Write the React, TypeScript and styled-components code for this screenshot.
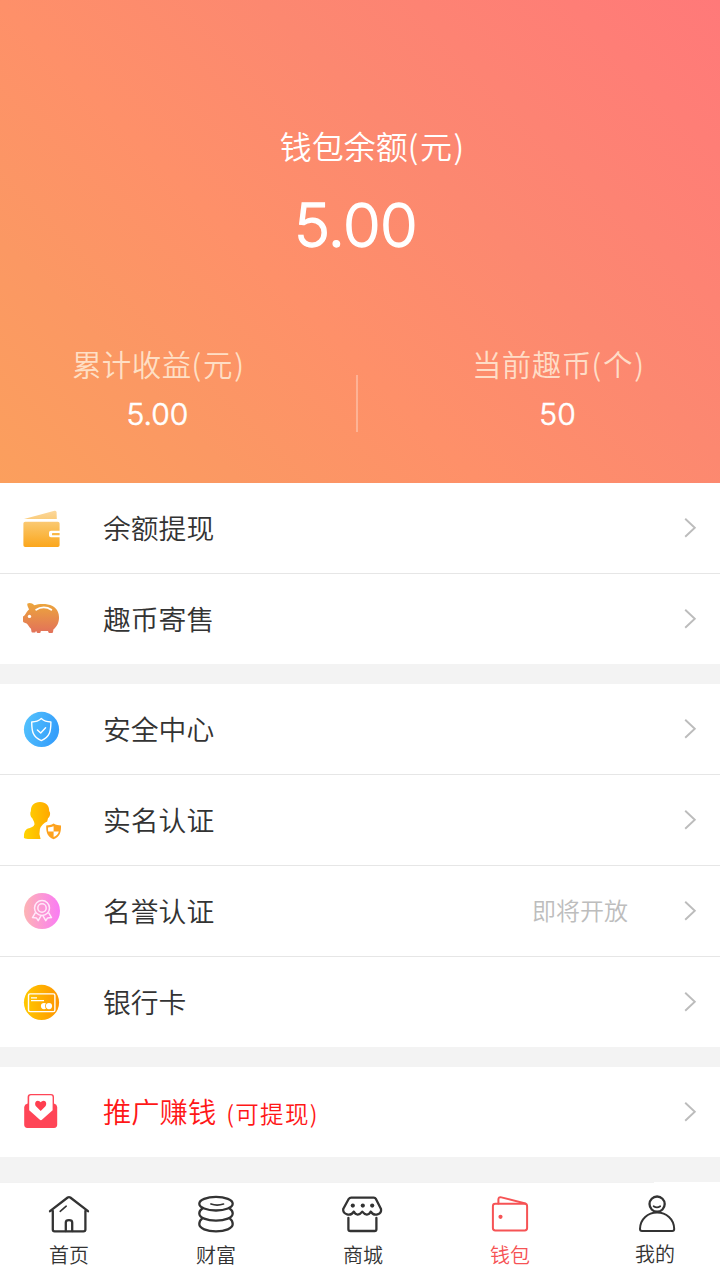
import React from 'react';
import styled, { createGlobalStyle } from 'styled-components';

const GlobalStyle = createGlobalStyle`
  * { box-sizing: border-box; }
  body {
    margin: 0;
    background: #f3f3f3;
    font-family: Inter, "Noto Sans CJK SC", sans-serif;
    font-weight: 350;
    color: #333;
  }
`;

const Page = styled.div`
  width: 720px;
  height: 1280px;
  display: flex;
  flex-direction: column;
  background: #f3f3f3;
  overflow: hidden;
`;

const Hero = styled.header`
  height: 483px;
  flex: none;
  display: flex;
  flex-direction: column;
  align-items: center;
  padding-top: 121px;
  color: #fff;
  background: linear-gradient(45deg, #fb9f5d 0%, #fb9863 20%, #fe9069 40%, #fc8870 62%, #ff7979 100%);
`;

const HeroLabel = styled.div`
  font-family: "Noto Sans CJK SC", sans-serif;
  font-size: 32px;
  line-height: 48px;
  padding-left: 24px;
  white-space: nowrap;
`;

const Unit = styled.span<{ $gap: number }>`
  letter-spacing: ${(p) => p.$gap}px;
  margin-right: ${(p) => -p.$gap}px;
`;

const HeroAmount = styled.div`
  font-size: 61px;
  font-weight: 300;
  -webkit-text-stroke: 1.3px #fff;
  letter-spacing: -0.6px;
  line-height: 72px;
  margin-top: 20px;
  padding-right: 9px;
`;

const Stats = styled.div`
  width: 100%;
  display: flex;
  justify-content: space-between;
  margin-top: 78px;
  padding: 0 75px 0 71px;
`;

const Stat = styled.div`
  width: 174px;
  display: flex;
  flex-direction: column;
  align-items: center;
`;

const StatLabel = styled.div`
  font-family: "Noto Sans CJK SC", sans-serif;
  font-size: 29.5px;
  line-height: 48px;
  letter-spacing: 0.4px;
  white-space: nowrap;
  color: rgba(255, 240, 220, 0.82);
`;

const StatValue = styled.div`
  font-size: 30px;
  font-weight: 300;
  -webkit-text-stroke: 0.6px #fff;
  line-height: 40px;
  margin-top: 7px;
  padding-right: 1px;
`;

const StatDivider = styled.div`
  width: 2px;
  height: 57px;
  margin: 36px 0 0 -2px;
  background: rgba(255, 255, 255, 0.3);
`;

const Group = styled.section`
  flex: none;
  margin-bottom: 20px;
  background: #fff;
`;

const Row = styled.div`
  height: 90px;
  display: flex;
  align-items: center;
  padding: 0 23px 0 20px;
  & + & {
    height: 91px;
    border-top: 1px solid #e6e6e6;
  }
`;

const RowIcon = styled.svg`
  width: 44px;
  height: 44px;
  flex: none;
  margin-right: 39px;
`;

const RowLabel = styled.div<{ $accent?: boolean }>`
  flex: 1;
  font-family: "Noto Sans CJK SC", sans-serif;
  font-size: ${(p) => (p.$accent ? '28.3px' : '27.8px')};
  line-height: 40px;
  padding-bottom: ${(p) => (p.$accent ? '0' : '2px')};
  white-space: nowrap;
  color: ${(p) => (p.$accent ? '#ff1717' : '#333')};
`;

const RowSuffix = styled.span`
  font-size: 23.5px;
  letter-spacing: 1.3px;
  margin-left: 10px;
`;

const RowNote = styled.div`
  font-family: "Noto Sans CJK SC", sans-serif;
  font-size: 24px;
  line-height: 36px;
  padding-bottom: 2px;
  color: #bdbdbd;
  margin-right: 55px;
`;

const ChevronSvg = styled.svg`
  width: 14px;
  height: 22px;
  flex: none;
`;

const Nav = styled.nav`
  height: 98px;
  flex: none;
  margin-top: 5px;
  display: flex;
  justify-content: space-between;
  padding: 12px 43px 0 49px;
  background: linear-gradient(#f2f2f2, #f2f2f2) 0 0 / 654px 1px no-repeat #fff;
`;

const NavItem = styled.div<{ $active?: boolean }>`
  width: 40px;
  display: flex;
  flex-direction: column;
  align-items: center;
  color: ${(p) => (p.$active ? '#f65355' : '#333')};
`;

const NavIcon = styled.svg`
  width: 44px;
  height: 40px;
  flex: none;
  fill: none;
  stroke: currentColor;
  stroke-width: 2.3;
  stroke-linecap: round;
  stroke-linejoin: round;
`;

const NavLabel = styled.div<{ $shift?: boolean }>`
  font-family: "Noto Sans CJK SC", sans-serif;
  font-size: 20px;
  line-height: 30px;
  white-space: nowrap;
  margin: ${(p) => (p.$shift ? '5px 4px 0 0' : '6px 0 0')};
`;

const Chevron = () => (
  <ChevronSvg viewBox="0 0 14 22" fill="none" stroke="#bcbcbc" strokeWidth="1.9">
    <path d="M2.2 1.8 L11.8 10.8 L2.2 19.8" />
  </ChevronSvg>
);

const WalletIcon = () => (
  <RowIcon viewBox="0 0 44 44">
    <defs>
      <linearGradient id="wallet" x1="0" y1="4" x2="0" y2="41" gradientUnits="userSpaceOnUse">
        <stop offset="0" stopColor="#fbd9a0" />
        <stop offset="0.45" stopColor="#fac25f" />
        <stop offset="1" stopColor="#fba61c" />
      </linearGradient>
    </defs>
    <path fill="url(#wallet)" d="M4 13 L34.5 4.8 Q36.5 4.3 36.6 6.4 L36.8 13 Z" />
    <path
      fill="url(#wallet)"
      d="M5.2 15.7 H37.8 Q39.6 15.7 39.6 17.5 V24.7 H31 Q29 24.7 29 26.7 V29.3 Q29 31.3 31 31.3 H39.6 V39.2 Q39.6 41 37.8 41 H5.2 Q3.4 41 3.4 39.2 V17.5 Q3.4 15.7 5.2 15.7 Z"
    />
    <rect x="32" y="27" width="7.6" height="2.2" rx="0.5" fill="url(#wallet)" />
  </RowIcon>
);

const PigIcon = () => (
  <RowIcon viewBox="0 0 44 44">
    <defs>
      <linearGradient id="pig" x1="0" y1="6" x2="0" y2="36" gradientUnits="userSpaceOnUse">
        <stop offset="0" stopColor="#eca63c" />
        <stop offset="1" stopColor="#e2715a" />
      </linearGradient>
    </defs>
    <path
      fill="url(#pig)"
      d="M7.2 6.7 Q10.8 5 14.5 8.2 C19 6.6 27 6.2 32.5 9 C37 11.5 39.2 16 39 21 C38.9 26 36.6 30 33.4 32.4 L33 35.3 Q32.8 36 32 36 H29.4 Q28.6 36 28.4 35.3 L28 34 H20.8 L20.6 35.3 Q20.4 36 19.6 36 H17.6 Q16.9 36 16.7 35.2 L16.4 34.2 L15.8 34.2 L15.5 35 Q15.3 35.5 14.6 35.5 H12.4 Q11.6 35.5 11.5 34.7 L11 31.8 C8.6 30 8.2 27.6 6.6 26.6 L4 25.6 Q3 25.2 3 24.2 V20 Q3 19.2 3.9 19 C5.3 18.4 6 15.4 9 12.6 C8.6 10.7 7.2 9.2 7.2 6.7 Z"
    />
    <path d="M16.2 12.7 C20.5 9.6 26.8 9.6 31.3 12.7" fill="none" stroke="#fff" strokeWidth="1.9" strokeLinecap="round" />
    <circle cx="9.5" cy="19.4" r="1.7" fill="#fff" />
  </RowIcon>
);

const ShieldIcon = () => (
  <RowIcon viewBox="0 0 44 44">
    <defs>
      <linearGradient id="shield" x1="0" y1="0" x2="1" y2="0.3">
        <stop offset="0" stopColor="#55c4fd" />
        <stop offset="1" stopColor="#369ffb" />
      </linearGradient>
    </defs>
    <circle cx="21.5" cy="22.4" r="17.6" fill="url(#shield)" />
    <g fill="none" stroke="#fff" strokeWidth="1.4" strokeLinejoin="round" strokeLinecap="round">
      <path d="M21.3 11.6 C19 13.8 15.5 15 11.7 15 C11.8 24 12.5 30 21.3 33.6 C30.1 30 30.8 24 30.9 15 C27.1 15 23.6 13.8 21.3 11.6 Z" />
      <path d="M17.4 23 L20.7 26 L25.6 20.8" />
    </g>
  </RowIcon>
);

const PersonIcon = () => (
  <RowIcon viewBox="0 0 44 44">
    <defs>
      <linearGradient id="person" x1="0" y1="0" x2="1" y2="0">
        <stop offset="0" stopColor="#ffd400" />
        <stop offset="1" stopColor="#ffa800" />
      </linearGradient>
    </defs>
    <path
      fill="url(#person)"
      d="M20 4 C26 4 29.3 7.6 29.2 13 Q30.6 14.4 30 17 Q29.4 19.4 28 20.2 L27.2 23.5 Q22 25.6 19.9 31 Q18.6 36 20.6 41 H8 Q4 40.6 3.9 39.4 Q3.6 32.6 7.8 30.6 C11.6 29.4 14.4 28.4 14.5 26 Q14.4 24 12.3 20.2 Q10.9 19.6 10.4 17 Q10 14.6 10.9 13 C10.8 7.6 14 4 20 4 Z"
    />
    <path
      fill="#fda21e"
      d="M33.6 25.6 C36 27 38.5 27.4 41 27.6 C41.2 34 40 39 33.6 41.2 C27.2 39 26 34 26.2 27.6 C28.7 27.4 31.2 27 33.6 25.6 Z"
    />
    <path fill="#fff" d="M33.6 28.2 V33.5 H28.2 Q28 31.5 28 29.5 Q31.5 29.3 33.6 28.2 Z M33.6 33.5 H38.8 Q38 37.4 33.6 39.1 Z" />
  </RowIcon>
);

const MedalIcon = () => (
  <RowIcon viewBox="0 0 44 44">
    <defs>
      <linearGradient id="medal" x1="0" y1="0" x2="1" y2="0">
        <stop offset="0" stopColor="#fdb4b4" />
        <stop offset="1" stopColor="#fa7bf5" />
      </linearGradient>
    </defs>
    <circle cx="22" cy="22" r="18" fill="url(#medal)" />
    <g fill="none" stroke="#ffe9fa" strokeWidth="1.5" strokeLinejoin="round">
      <circle cx="22" cy="19" r="7.5" />
      <circle cx="22" cy="19" r="4.2" />
      <path d="M15.6 23.3 L12.5 28.6 L16.4 28.9 L18.2 31.6 L21 26.8 M28.4 23.3 L31.5 28.6 L27.6 28.9 L25.8 31.6 L23 26.8" />
    </g>
  </RowIcon>
);

const CardIcon = () => (
  <RowIcon viewBox="0 0 44 44">
    <defs>
      <linearGradient id="card" x1="0" y1="0" x2="1" y2="0">
        <stop offset="0" stopColor="#ffc800" />
        <stop offset="1" stopColor="#ff9500" />
      </linearGradient>
    </defs>
    <circle cx="21.5" cy="22.4" r="17.6" fill="url(#card)" />
    <rect x="8.5" y="13.9" width="26.4" height="17.7" rx="1.6" fill="none" stroke="#fff" strokeWidth="1.4" />
    <path d="M11 17.9 H17 M11 20.6 H24" stroke="#fff" strokeWidth="1.1" />
    <circle cx="24" cy="26.1" r="3.1" fill="#fff" />
    <circle cx="28.7" cy="26.1" r="3.6" fill="#ffa600" />
    <circle cx="29" cy="26.1" r="3.1" fill="#fff" />
  </RowIcon>
);

const LetterIcon = () => (
  <RowIcon viewBox="0 0 44 44">
    <path
      fill="#ff4557"
      d="M10.8 4 H31 Q34 4 34 7 V13.6 Q37 14.6 37.2 17 V34.8 Q37.2 37.9 34 37.9 H7.4 Q4.2 37.9 4.2 34.8 V17 Q4.4 14.6 7.6 13.6 V7 Q7.6 4 10.8 4 Z"
    />
    <path fill="#fff" d="M10.8 5.3 H31 Q32.6 5.3 32.6 7 V20.2 L22.2 29.6 Q20.9 30.7 19.6 29.6 L9.2 20.2 V7 Q9.2 5.3 10.8 5.3 Z" />
    <path fill="#ff3f50" d="M20.7 21 L16.2 16.5 C14.3 14.3 15.2 10.7 17.8 10.7 Q19.7 10.7 20.7 12.2 Q21.7 10.7 23.6 10.7 C26.2 10.7 27.1 14.3 25.2 16.5 Z" />
  </RowIcon>
);

const HomeIcon = () => (
  <NavIcon viewBox="0 0 44 40">
    <path d="M3 17.2 L20.7 3.5 Q22 2.6 23.3 3.5 L41 17.2 M5.8 17 V35.6 Q5.8 37.4 7.6 37.4 H36.4 Q38.4 37.4 38.4 35.6 V17" />
    <path d="M18.8 37 V28.5 Q18.8 26.2 22 26.2 Q25.2 26.2 25.2 28.5 V37" />
    <path d="M13.2 17.3 L19.2 12.2" strokeWidth="1.6" />
  </NavIcon>
);

const CoinsIcon = () => (
  <NavIcon viewBox="0 0 44 40">
    <ellipse cx="22" cy="9.7" rx="16.7" ry="6.8" />
    <path d="M8.1 14.8 Q5.3 16.6 5.3 19.4 C5.3 23.6 12.8 26.6 22 26.6 S38.7 23.6 38.7 19.4 Q38.7 16.6 35.9 14.8" />
    <path d="M8.1 24.6 Q5.3 26.6 5.3 30 C5.3 34.4 12.8 37.4 22 37.4 S38.7 34.4 38.7 30 Q38.7 26.6 35.9 24.6" />
    <path d="M17 10 Q23 12.2 29.5 10" strokeWidth="1.7" />
  </NavIcon>
);

const ShopIcon = () => (
  <NavIcon viewBox="1 0 44 40">
    <path d="M11.2 3.6 H33.8 Q35.2 3.6 35.8 4.8 L41 15 C42 20.4 34 23 30.8 17.6 C28.8 21.8 25 21.2 22.3 17.6 C19.6 21.2 15.8 21.8 13.8 17.6 C10.6 23 2.6 20.4 3.2 15 L8.8 4.8 Q9.6 3.6 11.2 3.6 Z" />
    <path d="M8.4 24 V35.2 Q8.4 37 10.4 37 H34.6 Q36.4 37 36.4 35.2 V24" />
    <g fill="currentColor" stroke="none">
      <circle cx="12.8" cy="11.6" r="2.1" />
      <circle cx="22.8" cy="11.6" r="2.1" />
      <circle cx="32.2" cy="11.6" r="2.1" />
    </g>
  </NavIcon>
);

const PurseIcon = () => (
  <NavIcon viewBox="0 0 44 40">
    <g strokeWidth="2">
      <rect x="4.9" y="9.8" width="34.2" height="26.7" rx="2.4" />
      <path d="M10.4 9.4 V5.6 Q10.4 2.6 13.4 3.4 L37.4 9.5" />
    </g>
    <circle cx="12.5" cy="22.8" r="2.1" fill="currentColor" stroke="none" />
  </NavIcon>
);

const ProfileIcon = () => (
  <NavIcon viewBox="0 0 44 40">
    <circle cx="22.1" cy="10.1" r="7.6" />
    <path d="M5 35 C5.2 25 13 18.6 22.1 18.6 S39 25 39.2 35 Q39.2 37 37.2 37 H7 Q5 37 5 35 Z" strokeWidth="2" />
    <path d="M18.6 12.2 Q22 14.6 25.2 12.2" strokeWidth="1.7" />
  </NavIcon>
);

export default function App() {
  return (
    <>
      <GlobalStyle />
      <Page>
        <Hero>
          <HeroLabel>钱包余额<Unit $gap={1.6}>(元)</Unit></HeroLabel>
          <HeroAmount>5.00</HeroAmount>
          <Stats>
            <Stat>
              <StatLabel>累计收益<Unit $gap={1.7}>(元)</Unit></StatLabel>
              <StatValue>5.00</StatValue>
            </Stat>
            <StatDivider />
            <Stat>
              <StatLabel>当前趣币<Unit $gap={1.7}>(个)</Unit></StatLabel>
              <StatValue>50</StatValue>
            </Stat>
          </Stats>
        </Hero>

        <Group>
          <Row><WalletIcon /><RowLabel>余额提现</RowLabel><Chevron /></Row>
          <Row><PigIcon /><RowLabel>趣币寄售</RowLabel><Chevron /></Row>
        </Group>

        <Group>
          <Row><ShieldIcon /><RowLabel>安全中心</RowLabel><Chevron /></Row>
          <Row><PersonIcon /><RowLabel>实名认证</RowLabel><Chevron /></Row>
          <Row><MedalIcon /><RowLabel>名誉认证</RowLabel><RowNote>即将开放</RowNote><Chevron /></Row>
          <Row><CardIcon /><RowLabel>银行卡</RowLabel><Chevron /></Row>
        </Group>

        <Group>
          <Row>
            <LetterIcon />
            <RowLabel $accent>推广赚钱<RowSuffix>(可提现)</RowSuffix></RowLabel>
            <Chevron />
          </Row>
        </Group>

        <Nav>
          <NavItem><HomeIcon /><NavLabel>首页</NavLabel></NavItem>
          <NavItem><CoinsIcon /><NavLabel>财富</NavLabel></NavItem>
          <NavItem><ShopIcon /><NavLabel>商城</NavLabel></NavItem>
          <NavItem $active><PurseIcon /><NavLabel>钱包</NavLabel></NavItem>
          <NavItem><ProfileIcon /><NavLabel $shift>我的</NavLabel></NavItem>
        </Nav>
      </Page>
    </>
  );
}
